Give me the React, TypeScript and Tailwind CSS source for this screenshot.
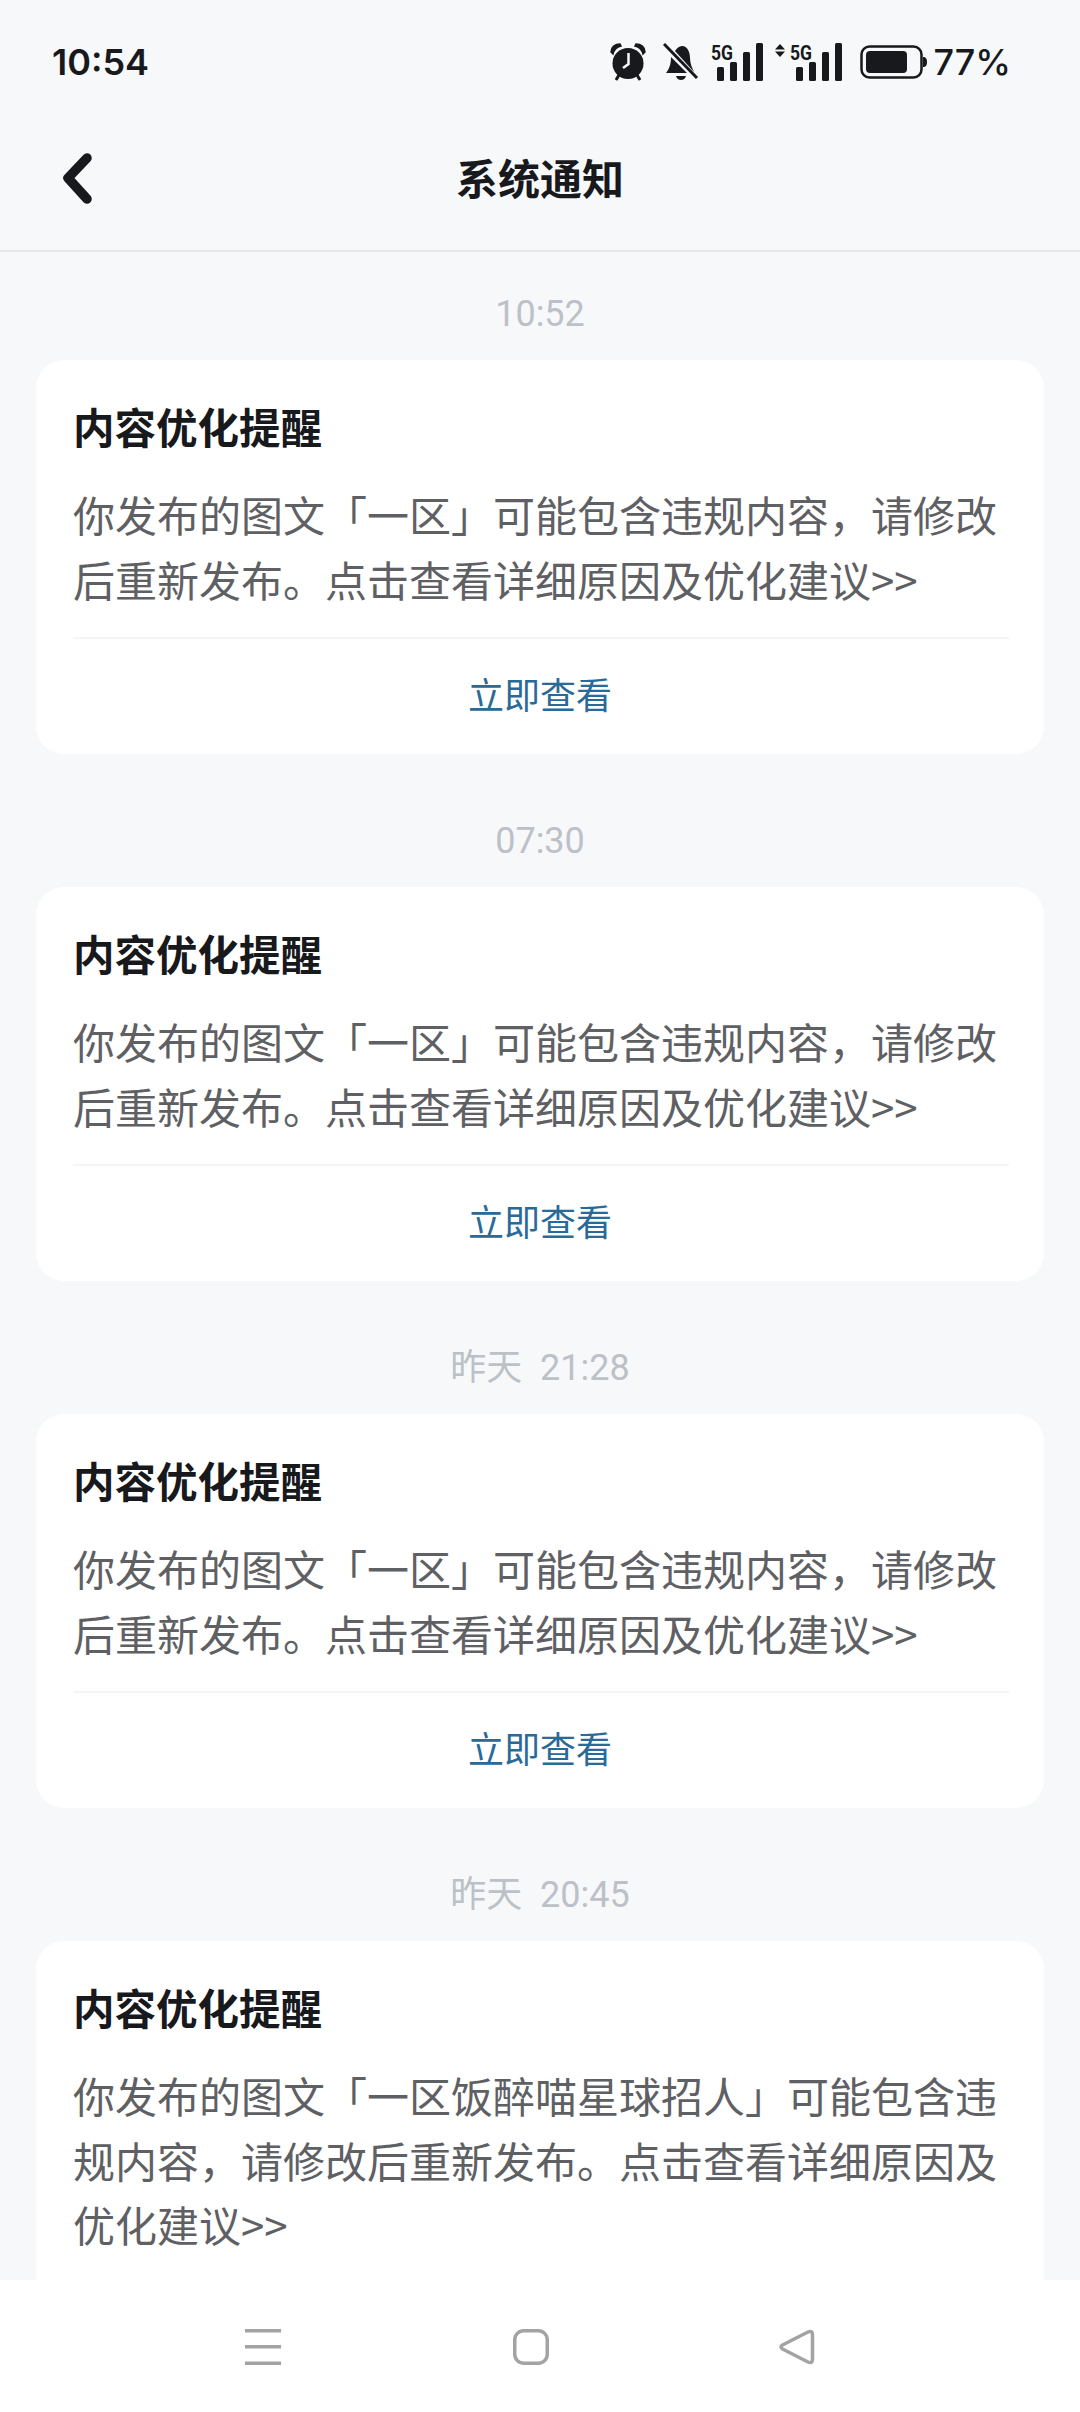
const cjk = { fontFamily: '"Noto Sans CJK SC", "Noto Sans", sans-serif' };

const short = "你发布的图文「一区」可能包含违规内容\uFF0C请修改后重新发布。点击查看详细原因及优化建议>>";
const long = "你发布的图文「一区饭醉喵星球招人」可能包含违规内容\uFF0C请修改后重新发布。点击查看详细原因及优化建议>>";

const items = [
  { time: "10:52", body: short, link: true },
  { time: "07:30", body: short, link: true },
  { time: "昨天  21:28", body: short, link: true },
  { time: "昨天  20:45", body: long, link: false },
];

function Signal({ arrows }: { arrows?: boolean }) {
  return (
    <svg width={arrows ? 68 : 53} height="38" viewBox={arrows ? "-15 0 68 38" : "0 0 53 38"} fill="#17191c" className="overflow-visible">
      {arrows && <path d="M-10 1 L-5 6.5 H-15 Z M-15 8.5 H-5 L-10 14 Z" />}
      <text x="0" y="17" fontSize="21" fontWeight="700" fontFamily="Roboto, sans-serif" textLength="22" lengthAdjust="spacingAndGlyphs">5G</text>
      <rect x="6" y="24" width="7" height="14" rx="1.5" />
      <rect x="19" y="19" width="7" height="19" rx="1.5" />
      <rect x="32" y="9" width="7" height="29" rx="1.5" />
      <rect x="45" y="0" width="7" height="38" rx="1.5" />
    </svg>
  );
}

function StatusBar() {
  return (
    <div className="flex items-center justify-between h-[80px] pt-[44px] pl-[52px] pr-[69px]">
      <span className="text-[36px] font-semibold text-[#17191c] leading-none" style={{ fontFamily: "Inter, sans-serif" }}>10:54</span>
      <div className="flex items-center">
        {/* alarm */}
        <svg width="38" height="38" viewBox="0 0 38 38" fill="#17191c">
          <circle cx="19" cy="20.5" r="15.5" />
          <path d="M2 9 C2 4 6 1 11 1 L12 3 C8 4 5 7 4 11 Z M36 9 C36 4 32 1 27 1 L26 3 C30 4 33 7 34 11 Z" stroke="#17191c" strokeWidth="1.5" />
          <path d="M10 32 L7 37 M28 32 L31 37" stroke="#17191c" strokeWidth="3" />
          <path d="M19.5 10 V21 L14 25" fill="none" stroke="#f7f8fa" strokeWidth="2.5" />
        </svg>
        {/* muted bell */}
        <svg width="36" height="38" viewBox="0 0 36 38" className="ml-[16px]" fill="#17191c">
          <path d="M3 30 C6 26 8 22 8 14 L24 30 Z" />
          <path d="M12 8 C14 5 16 3.5 19 3 C25 3 27 10 27 15 C27 20 29 25 31 29 Z" />
          <path d="M13 33 H23 C22 36 20 37 18 37 C16 37 14 36 13 33 Z" />
          <path d="M1 1 L34 35" stroke="#17191c" strokeWidth="3" />
        </svg>
        <div className="ml-[12px] flex"><Signal /></div>
        <div className="ml-[11px] flex"><Signal arrows /></div>
        {/* battery */}
        <svg width="67" height="34" viewBox="0 0 67 34" className="ml-[17px]" fill="#17191c">
          <rect x="1.5" y="1.5" width="60" height="31" rx="8" fill="none" stroke="#17191c" strokeWidth="2.5" />
          <rect x="6" y="6" width="41" height="22" rx="4" />
          <path d="M63 12 C66 12 67 14 67 17 C67 20 66 22 63 22 Z" />
        </svg>
        <span className="ml-[6px] text-[36px] font-medium text-[#17191c] leading-none" style={{ fontFamily: "Inter, sans-serif" }}>77%</span>
      </div>
    </div>
  );
}

function Card({ time, body, link }: { time: string; body: string; link: boolean }) {
  return (
    <div>
      <div className="h-[108px] pt-[27px] pb-[11px] flex items-center justify-center text-[36px] leading-none text-[#bcc1c7] whitespace-pre" style={{ fontFamily: 'Roboto, "Noto Sans CJK SC", sans-serif' }}>
        {time}
      </div>
      <div className="bg-white rounded-[28px] pl-[37px] pr-[35px] pb-[39px]">
        <h2 className="pt-[41px] text-[41.5px] leading-[50px] font-bold text-[#17191c]">内容优化提醒</h2>
        <p className="mt-[31px] text-[42px] leading-[64.5px] text-[#5e6064] border-b-2 border-[#f4f5f6] pb-[26px]">{body}</p>
        {link && <div className="mt-[32px] pr-[2px] text-center text-[36px] leading-[44px] text-[#2a6a98]">立即查看</div>}
      </div>
    </div>
  );
}

export default function App() {
  return (
    <div className="h-[2412px] w-[1080px] flex flex-col bg-[#f7f8fa] overflow-hidden" style={cjk}>
      <header className="h-[252px] shrink-0 border-b-2 border-[#e6e7ea]">
        <StatusBar />
        <div className="relative h-[170px] pt-[23px] flex items-center justify-center">
          <svg width="40" height="60" viewBox="0 0 40 60" className="absolute left-[58px] top-[68px]" fill="none" stroke="#17191c" strokeWidth="9.5" strokeLinecap="round" strokeLinejoin="round">
            <path d="M29 10 L10 30 L29 51" />
          </svg>
          <h1 className="text-[42px] font-bold text-[#17191c] leading-none">系统通知</h1>
        </div>
      </header>
      <main className="flex-1 min-h-0 overflow-hidden px-[36px] flex flex-col gap-[25px]">
        {items.map((it, i) => (
          <div key={i} className="shrink-0"><Card time={it.time} body={it.body} link={it.link} /></div>
        ))}
      </main>
      <nav className="h-[132px] shrink-0 bg-white flex items-center pt-[1px]">
        <svg width="36" height="36" viewBox="0 0 36 36" fill="#a3a3a3" className="ml-[245px]">
          <rect x="0" y="0" width="36" height="3.5" />
          <rect x="0" y="16" width="36" height="3.5" />
          <rect x="0" y="32.5" width="36" height="3.5" />
        </svg>
        <svg width="36" height="36" viewBox="0 0 36 36" fill="none" stroke="#a3a3a3" strokeWidth="3.5" className="ml-[232px]">
          <rect x="1.75" y="1.75" width="32.5" height="32.5" rx="9" />
        </svg>
        <svg width="36" height="36" viewBox="0 0 36 36" fill="none" stroke="#a3a3a3" strokeWidth="3.5" strokeLinejoin="round" className="ml-[230px]">
          <path d="M29 3 Q33.5 1 33.5 6 V30 Q33.5 35 29 33 L3.5 20 Q0.5 18 3.5 16 Z" />
        </svg>
      </nav>
    </div>
  );
}
